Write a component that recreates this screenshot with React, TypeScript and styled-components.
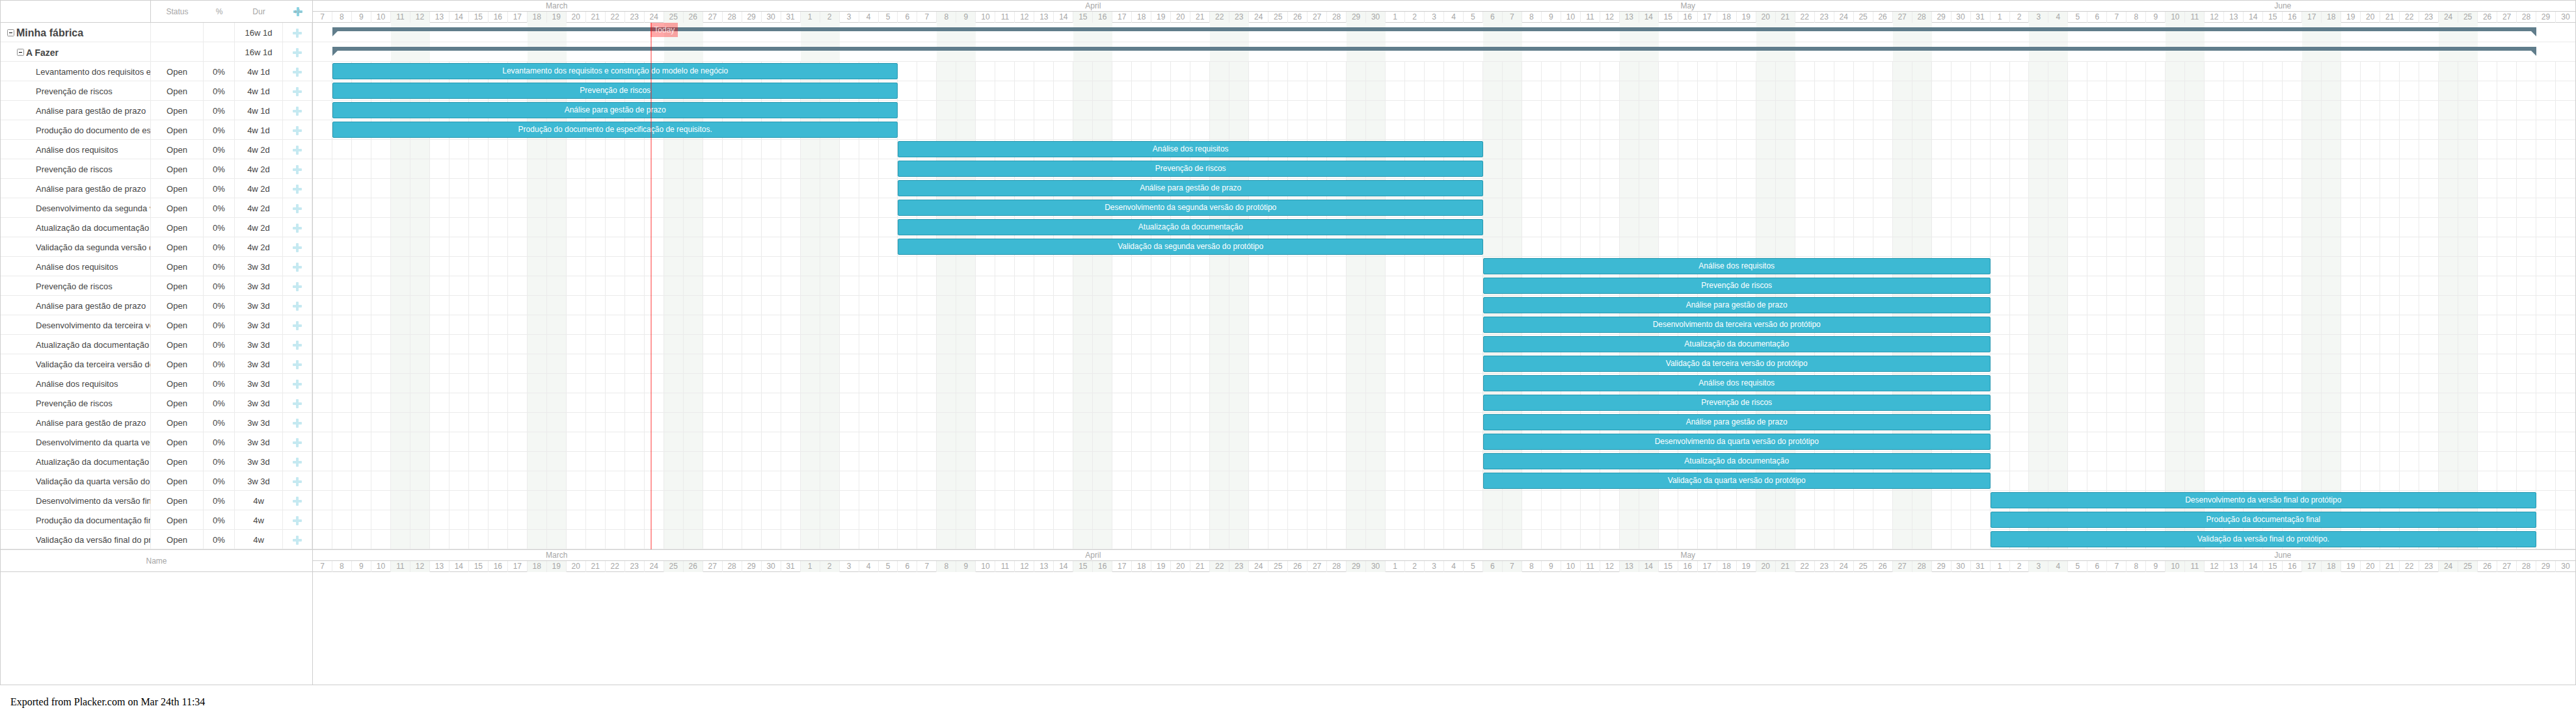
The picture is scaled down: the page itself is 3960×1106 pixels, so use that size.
import React from "react";
import styled, { createGlobalStyle } from "styled-components";

const Global = createGlobalStyle`
  body { margin: 0; background: #fff; }
  * { box-sizing: border-box; }
`;

const sans = `"Liberation Sans", Arial, Helvetica, sans-serif`;
const COLUMNS = "231px 81px 48px 74px 45px";
const ROW = 30;

const months = [
  { name: "March", from: 7, to: 31 },
  { name: "April", from: 1, to: 30 },
  { name: "May", from: 1, to: 31 },
  { name: "June", from: 1, to: 30 },
];

const days = months
  .flatMap((m) => Array.from({ length: m.to - m.from + 1 }, (_, i) => m.from + i))
  .map((day, i) => ({ day, weekend: i % 7 === 4 || i % 7 === 5 }));
const TOTAL = days.length;

type Item = { name: string; dur: string; start: number; length: number; level: number };

const phase = (dur: string, start: number, length: number, names: string[]): Item[] =>
  names.map((name) => ({ name, dur, start, length, level: 2 }));

const items: Item[] = [
  { name: "Minha fábrica", dur: "16w 1d", start: 1, length: 113, level: 0 },
  { name: "A Fazer", dur: "16w 1d", start: 1, length: 113, level: 1 },
  ...phase("4w 1d", 1, 29, [
    "Levantamento dos requisitos e construção do modelo de negócio",
    "Prevenção de riscos",
    "Análise para gestão de prazo",
    "Produção do documento de especificação de requisitos.",
  ]),
  ...phase("4w 2d", 30, 30, [
    "Análise dos requisitos",
    "Prevenção de riscos",
    "Análise para gestão de prazo",
    "Desenvolvimento da segunda versão do protótipo",
    "Atualização da documentação",
    "Validação da segunda versão do protótipo",
  ]),
  ...phase("3w 3d", 60, 26, [
    "Análise dos requisitos",
    "Prevenção de riscos",
    "Análise para gestão de prazo",
    "Desenvolvimento da terceira versão do protótipo",
    "Atualização da documentação",
    "Validação da terceira versão do protótipo",
    "Análise dos requisitos",
    "Prevenção de riscos",
    "Análise para gestão de prazo",
    "Desenvolvimento da quarta versão do protótipo",
    "Atualização da documentação",
    "Validação da quarta versão do protótipo",
  ]),
  ...phase("4w", 86, 28, [
    "Desenvolvimento da versão final do protótipo",
    "Produção da documentação final",
    "Validação da versão final do protótipo.",
  ]),
];

const Gantt = styled.main`
  display: grid;
  grid-template-columns: 480px minmax(0, 1fr);
  min-height: 1054px;
  border: 1px solid #cecece;
  font-family: ${sans};
  font-size: 13px;
  color: #454545;
`;

const ListPane = styled.section`
  border-right: 1px solid #cecece;
`;

const TaskTable = styled.table`
  display: block;
`;

const TableHead = styled.thead`
  display: block;
  border-bottom: 1px solid #cecece;
`;

const TableBody = styled.tbody`
  display: block;
`;

const HeadRow = styled.tr`
  display: grid;
  grid-template-columns: ${COLUMNS};
  height: 33px;
`;

const HeadCell = styled.th<{ $divided?: boolean }>`
  display: flex;
  align-items: center;
  justify-content: center;
  padding: 0;
  font-size: 12px;
  font-weight: 400;
  color: #a6a6a6;
  border-right: ${(p) => (p.$divided ? "1px solid #cecece" : "0")};
`;

const TaskRow = styled.tr`
  display: grid;
  grid-template-columns: ${COLUMNS};
  height: ${ROW}px;
  border-bottom: 1px solid #ebebeb;
`;

const Cell = styled.td`
  display: flex;
  align-items: center;
  justify-content: center;
  padding: 2px 0 0;
  border-right: 1px solid #ebebeb;
  overflow: hidden;
  white-space: nowrap;
`;

const NameCell = styled(Cell)<{ $level: number }>`
  justify-content: flex-start;
  gap: 3px;
  padding-left: ${(p) => [10, 25, 54][p.$level]}px;
  font-size: ${(p) => (p.$level === 0 ? 16 : p.$level === 1 ? 14 : 13)}px;
  font-weight: ${(p) => (p.$level < 2 ? 700 : 400)};
`;

const NameText = styled.span`
  flex: 1;
  min-width: 0;
  overflow: hidden;
`;

const ToggleButton = styled.button`
  display: flex;
  flex: none;
  width: 11px;
  height: 11px;
  padding: 0;
  border: 0;
  background: none;
`;

const AddButton = styled.button`
  display: flex;
  padding: 0;
  border: 0;
  background: none;
  color: #c5e9f1;
`;

const AddAllButton = styled(AddButton)`
  color: #8bd3e3;
`;

const ListFooter = styled.footer`
  display: flex;
  align-items: center;
  justify-content: center;
  height: 35px;
  border-top: 1px solid #cecece;
  border-bottom: 1px solid #cecece;
  font-size: 12px;
  color: #a6a6a6;
`;

const ChartPane = styled.section`
  min-width: 0;
`;

const DayGrid = styled.div`
  display: grid;
  grid-template-columns: repeat(${TOTAL}, minmax(0, 1fr));
`;

const MonthRow = styled(DayGrid)`
  height: 17px;
  border-bottom: 1px solid #cecece;
`;

const Month = styled.div<{ $span: number }>`
  grid-column: span ${(p) => p.$span};
  text-align: center;
  font-size: 12px;
  line-height: 16px;
  color: #a6a6a6;
`;

const Day = styled.div<{ $weekend: boolean }>`
  height: 17px;
  border-right: 1px solid #ebebeb;
  background: ${(p) => (p.$weekend ? "#f4f7f4" : "#fff")};
  box-shadow: ${(p) => (p.$weekend ? "none" : "inset 0 -1px #cecece")};
  text-align: center;
  font-size: 12px;
  line-height: 17px;
  color: #a6a6a6;

  &:last-child { border-right: 0; }
`;

const FootScale = styled.div`
  border-top: 1px solid #cecece;
`;

const Rows = styled.div`
  position: relative;
`;

const ChartRow = styled(DayGrid)`
  height: ${ROW}px;
  border-bottom: 1px solid #ebebeb;
`;

const Slot = styled.div<{ $weekend: boolean; $lined: boolean; $col: number }>`
  grid-row: 1;
  grid-column: ${(p) => p.$col};
  border-right: ${(p) => (p.$lined ? "1px solid #ebebeb" : "0")};
  background: ${(p) => (p.$weekend ? "#f4f7f4" : "transparent")};

  &:nth-child(${TOTAL}) { border-right: 0; }
`;

const Bar = styled.div<{ $start: number; $length: number }>`
  grid-row: 1;
  grid-column: ${(p) => p.$start + 1} / span ${(p) => p.$length};
  height: 25px;
  margin-top: 2px;
  border: 1px solid #2898b0;
  border-radius: 2px;
  background: #3db9d3;
  color: #fff;
  font-size: 12px;
  line-height: 23px;
  text-align: center;
  white-space: nowrap;
  overflow: hidden;
`;

const SummaryBar = styled.div<{ $start: number; $length: number }>`
  grid-row: 1;
  grid-column: ${(p) => p.$start + 1} / span ${(p) => p.$length};
  height: 14px;
  margin-top: 7px;
  background: #607d8b;
  clip-path: polygon(0 0, 100% 0, 100% 100%, calc(100% - 8px) 6px, 8px 6px, 0 100%);
`;

const TodayMarker = styled.div`
  position: absolute;
  top: 0;
  bottom: 0;
  width: 2px;
  background: rgba(255, 0, 0, 0.4);
`;

const TodayTag = styled.span`
  position: absolute;
  top: 0;
  left: 0;
  padding: 0 5px;
  background: rgba(255, 0, 0, 0.34);
  color: rgba(255, 255, 255, 0.8);
  font-size: 12px;
  line-height: 22px;
`;

const ExportNote = styled.p`
  margin: 0;
  padding: 17px 16px;
  font-family: "Liberation Serif", "Times New Roman", serif;
  font-size: 16px;
  line-height: 18px;
  color: #000;
`;

const Plus = ({ marked = false }: { marked?: boolean }) => (
  <svg width="14" height="14" viewBox="0 0 14 14" aria-hidden="true">
    <path
      d="M6 0h2a1 1 0 0 1 1 1v4h4a1 1 0 0 1 1 1v2a1 1 0 0 1-1 1H9v4a1 1 0 0 1-1 1H6a1 1 0 0 1-1-1V9H1a1 1 0 0 1-1-1V6a1 1 0 0 1 1-1h4V1a1 1 0 0 1 1-1z"
      fill="currentColor"
    />
    {marked && (
      <path d="M1 7h5M3.5 4.5v5M7 10l2.5-7M10 7.5h3" fill="none" stroke="#a6a6a6" strokeOpacity="0.7" />
    )}
  </svg>
);

const Minus = () => (
  <svg width="11" height="11" viewBox="0 0 11 11" aria-hidden="true">
    <rect x="0.5" y="0.5" width="10" height="10" rx="1" fill="#fff" stroke="#919191" />
    <path d="M2 8h7v1H2z" fill="#e4e4e4" />
    <path d="M3 5.5h5" stroke="#000" />
  </svg>
);

const Scale = () => (
  <>
    <MonthRow>
      {months.map((m) => (
        <Month key={m.name} $span={m.to - m.from + 1}>{m.name}</Month>
      ))}
    </MonthRow>
    <DayGrid>
      {days.map((d, i) => (
        <Day key={i} $weekend={d.weekend}>{d.day}</Day>
      ))}
    </DayGrid>
  </>
);

export default function App() {
  return (
    <>
      <Global />
      <Gantt>
        <ListPane>
          <TaskTable>
            <TableHead>
              <HeadRow>
                <HeadCell $divided aria-label="Name" />
                <HeadCell>Status</HeadCell>
                <HeadCell>%</HeadCell>
                <HeadCell>Dur</HeadCell>
                <HeadCell>
                  <AddAllButton aria-label="Add"><Plus marked /></AddAllButton>
                </HeadCell>
              </HeadRow>
            </TableHead>
            <TableBody>
              {items.map((t, i) => (
                <TaskRow key={i}>
                  <NameCell $level={t.level}>
                    {t.level < 2 && <ToggleButton aria-label="Collapse"><Minus /></ToggleButton>}
                    <NameText>{t.name}</NameText>
                  </NameCell>
                  <Cell>{t.level === 2 && "Open"}</Cell>
                  <Cell>{t.level === 2 && "0%"}</Cell>
                  <Cell>{t.dur}</Cell>
                  <Cell>
                    <AddButton aria-label="Add"><Plus /></AddButton>
                  </Cell>
                </TaskRow>
              ))}
            </TableBody>
          </TaskTable>
          <ListFooter>Name</ListFooter>
        </ListPane>
        <ChartPane>
          <Scale />
          <Rows>
            {items.map((t, i) => (
              <ChartRow key={i}>
                {days.map((d, n) => (
                  <Slot key={n} $col={n + 1} $weekend={d.weekend} $lined={t.level === 2} />
                ))}
                {t.level === 2 ? (
                  <Bar $start={t.start} $length={t.length}>{t.name}</Bar>
                ) : (
                  <SummaryBar $start={t.start} $length={t.length} />
                )}
              </ChartRow>
            ))}
            <TodayMarker style={{ left: `${(17.32 / TOTAL) * 100}%` }}>
              <TodayTag>Today</TodayTag>
            </TodayMarker>
          </Rows>
          <FootScale>
            <Scale />
          </FootScale>
        </ChartPane>
      </Gantt>
      <ExportNote>Exported from Placker.com on Mar 24th 11:34</ExportNote>
    </>
  );
}
